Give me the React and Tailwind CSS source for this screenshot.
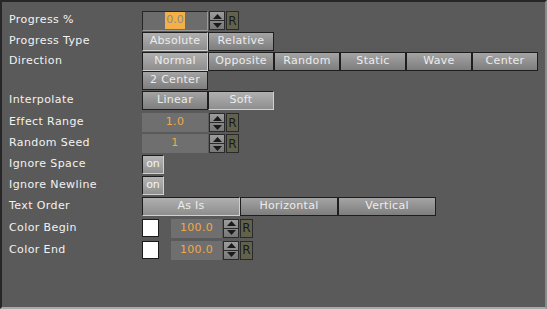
import React from "react";

const font = { fontFamily: '"DejaVu Sans", Verdana, sans-serif' };

function Btn({ label, on, w = "w-[66px]" }) {
  return (
    <div
      className={`${w} h-[19px] flex items-center justify-center text-[11px] tracking-[0.3px] text-[#ececec] border ${
        on
          ? "border-t-[#1c1c1c] border-l-[#1c1c1c] border-b-[#d0d0d0] border-r-[#d0d0d0] bg-gradient-to-b from-[#b0b0b0] to-[#8e8e8e]"
          : "border-[#1e1e1e] bg-gradient-to-b from-[#a4a4a4] to-[#7e7e7e]"
      }`}
    >
      {label}
    </div>
  );
}

function Spinner() {
  return (
    <div className="flex items-stretch h-[19px]">
      <div className="w-[16px] flex flex-col border border-[#2a2a2a] bg-gradient-to-b from-[#9c9c9c] to-[#787878]">
        <div className="flex-1 flex items-center justify-center border-b border-[#2a2a2a]">
          <svg width="9" height="5" viewBox="0 0 9 5">
            <path d="M0 5 L4.5 0 L9 5 Z" fill="#1a1a1a" />
          </svg>
        </div>
        <div className="flex-1 flex items-center justify-center">
          <svg width="9" height="5" viewBox="0 0 9 5">
            <path d="M0 0 L4.5 5 L9 0 Z" fill="#1a1a1a" />
          </svg>
        </div>
      </div>
      <div className="w-[13px] ml-px flex items-center justify-center border border-[#2a2a2a] bg-[#62624c] text-[12px] text-[#1a1a1a]">
        R
      </div>
    </div>
  );
}

function Row({ label, children, h = "h-[21px]" }) {
  return (
    <div className={`flex items-center ${h}`}>
      <div className="w-[133px] shrink-0 text-[11px] tracking-[0.4px] text-[#f2f2f2]">{label}</div>
      {children}
    </div>
  );
}

function NumField({ value, w = "w-[66px]" }) {
  return (
    <div className={`${w} h-[19px] bg-[#6f6f6f] flex items-center justify-center text-[11px] tracking-[0.3px] text-[#f0a848]`}>
      {value}
    </div>
  );
}

function Swatch() {
  return <div className="w-[17px] h-[18px] bg-white border border-[#1a1a1a]" />;
}

function OnBtn() {
  return (
    <div className="w-[22px] h-[19px] flex items-center justify-center text-[11px] text-[#f4f4f4] border border-t-[#1c1c1c] border-l-[#1c1c1c] border-b-[#d0d0d0] border-r-[#d0d0d0] bg-gradient-to-b from-[#b4b4b4] to-[#909090]">
      on
    </div>
  );
}

export default function App() {
  return (
    <div
      className="w-[547px] h-[309px] bg-[#5a5a5a] border-2 border-t-[#262626] border-l-[#262626] border-b-[#a8a8a8] border-r-[#8a8a8a] pl-[7px] pt-[8px]"
      style={font}
    >
      <Row label="Progress %">
        <div className="flex items-center gap-px">
          <div className="w-[66px] h-[20px] bg-[#6c6c6c] border border-t-[#262626] border-l-[#262626] border-b-[#9a9a9a] border-r-[#9a9a9a] flex items-center justify-center text-[11px]">
            <span className="bg-[#f4b048] text-[#8a8a8a] px-px">0.0</span>
          </div>
          <Spinner />
        </div>
      </Row>
      <Row label="Progress Type" h="h-[20px]">
        <div className="flex">
          <Btn label="Absolute" on />
          <Btn label="Relative" />
        </div>
      </Row>
      <div className="flex items-start mt-px">
        <div className="w-[133px] shrink-0 text-[11px] tracking-[0.4px] text-[#f2f2f2] h-[19px] flex items-center">Direction</div>
        <div className="flex flex-wrap w-[400px]">
          <Btn label="Normal" on />
          <Btn label="Opposite" />
          <Btn label="Random" />
          <Btn label="Static" />
          <Btn label="Wave" />
          <Btn label="Center" />
          <Btn label="2 Center" />
        </div>
      </div>
      <Row label="Interpolate" h="h-[20px]">
        <div className="flex">
          <Btn label="Linear" />
          <Btn label="Soft" on />
        </div>
      </Row>
      <div className="h-[2px]" />
      <Row label="Effect Range">
        <div className="flex items-center gap-px">
          <NumField value="1.0" />
          <Spinner />
        </div>
      </Row>
      <Row label="Random Seed">
        <div className="flex items-center gap-px">
          <NumField value="1" />
          <Spinner />
        </div>
      </Row>
      <Row label="Ignore Space">
        <OnBtn />
      </Row>
      <Row label="Ignore Newline">
        <OnBtn />
      </Row>
      <Row label="Text Order" h="h-[20px]">
        <div className="flex">
          <Btn label="As Is" on w="w-[98px]" />
          <Btn label="Horizontal" w="w-[98px]" />
          <Btn label="Vertical" w="w-[98px]" />
        </div>
      </Row>
      <div className="h-px" />
      <Row label="Color Begin" h="h-[22px]">
        <div className="flex items-center">
          <Swatch />
          <div className="ml-[12px] mr-px">
            <NumField value="100.0" w="w-[51px]" />
          </div>
          <Spinner />
        </div>
      </Row>
      <Row label="Color End" h="h-[22px]">
        <div className="flex items-center">
          <Swatch />
          <div className="ml-[12px] mr-px">
            <NumField value="100.0" w="w-[51px]" />
          </div>
          <Spinner />
        </div>
      </Row>
    </div>
  );
}
